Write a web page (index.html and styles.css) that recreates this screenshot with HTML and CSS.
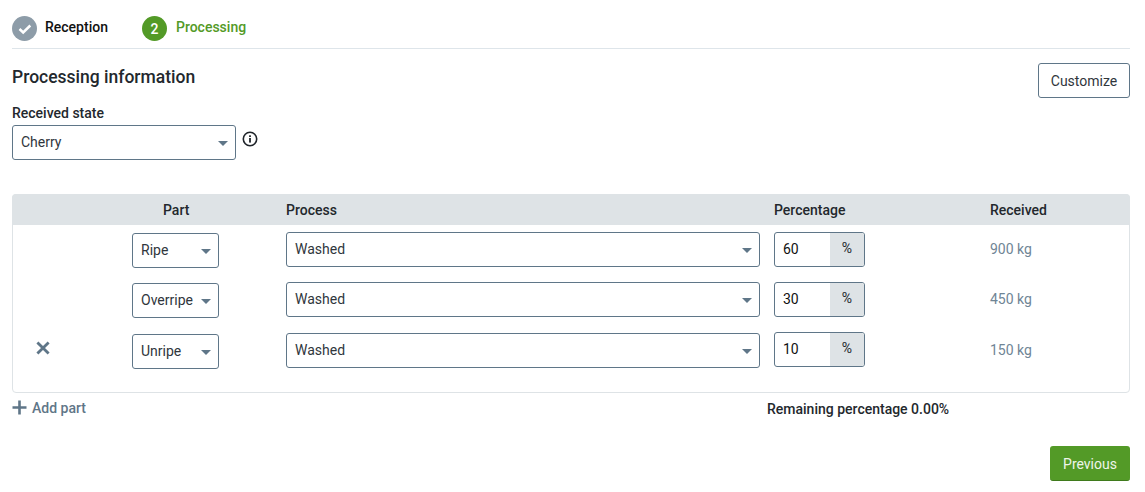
FILE: index.html
```html
<!DOCTYPE html>
<html lang="en">
<head>
<meta charset="utf-8">
<title>Processing</title>
<link rel="stylesheet" href="styles.css">
</head>
<body>
<div class="page">
  <nav class="stepper">
    <div class="step done">
      <span class="dot"><svg width="14" height="14" viewBox="0 0 14 14"><path d="M1.500 7 5.200 10.500 12.300 3.500" fill="none" stroke="#fff" stroke-width="2.500"/></svg></span>
      <span class="step-label">Reception</span>
    </div>
    <div class="step active">
      <span class="dot">2</span>
      <span class="step-label">Processing</span>
    </div>
  </nav>
  <section class="info">
    <div>
      <h1>Processing information</h1>
      <label class="field-label">Received state</label>
      <div class="state-row">
        <div class="select state"><span>Cherry</span><i class="caret"></i></div>
        <svg class="info-icon" width="16" height="16" viewBox="0 0 16 16"><circle cx="8" cy="8" r="6.700" fill="none" stroke="#1f2429" stroke-width="1.600"/><rect x="7.100" y="7" width="1.800" height="4.600" fill="#1f2429"/><rect x="7.100" y="4.300" width="1.800" height="1.700" fill="#1f2429"/></svg>
      </div>
    </div>
    <button class="btn outline">Customize</button>
  </section>
  <section class="table">
    <div class="thead grid">
      <span></span><span class="th-part">Part</span><span>Process</span><span>Percentage</span><span>Received</span>
    </div>
    <div class="tbody">
      <div class="row grid">
        <span></span>
        <div class="select part"><span>Ripe</span><i class="caret"></i></div>
        <div class="select"><span>Washed</span><i class="caret"></i></div>
        <div class="pct"><span class="pct-val">60</span><span class="pct-unit">%</span></div>
        <span class="kg">900 kg</span>
      </div>
      <div class="row grid">
        <span></span>
        <div class="select part"><span>Overripe</span><i class="caret"></i></div>
        <div class="select"><span>Washed</span><i class="caret"></i></div>
        <div class="pct"><span class="pct-val">30</span><span class="pct-unit">%</span></div>
        <span class="kg">450 kg</span>
      </div>
      <div class="row grid last">
        <svg class="remove" width="14" height="14" viewBox="0 0 14 14"><path d="M1.400 1.400 12.600 12.600M12.600 1.400 1.400 12.600" stroke="#5f7688" stroke-width="2.800" fill="none"/></svg>
        <div class="select part"><span>Unripe</span><i class="caret"></i></div>
        <div class="select"><span>Washed</span><i class="caret"></i></div>
        <div class="pct"><span class="pct-val">10</span><span class="pct-unit">%</span></div>
        <span class="kg">150 kg</span>
      </div>
    </div>
  </section>
  <div class="below">
    <div class="add"><svg width="15" height="15" viewBox="0 0 15 15"><path d="M7.500 .5V14.500M.5 7.500H14.500" stroke="#5f7688" stroke-width="2.600" fill="none"/></svg><span>Add part</span></div>
    <div class="remaining">Remaining percentage 0.00%</div>
  </div>
  <div class="footer"><button class="btn primary">Previous</button></div>
</div>
</body>
</html>
```
FILE: styles.css
```css
* { box-sizing: border-box; }
html, body { margin: 0; padding: 0; background: #fff; }
body { font-family: Roboto, "Liberation Sans", sans-serif; font-size: 14px; color: #2a3036; overflow: hidden; }
.page { width: 1145px; height: 492px; padding: 16px 15px 0 12px; }

.stepper { display: flex; gap: 34px; height: 33px; border-bottom: 1px solid #dee5ea; }
.step { display: flex; align-items: flex-start; gap: 8px; }
.step.active { gap: 9px; }
.dot { width: 25px; height: 25px; border-radius: 50%; display: flex; align-items: center; justify-content: center; color: #fff; font-size: 14px; font-weight: 500; }
.done .dot { background: #8d9ca8; }
.active .dot { background: #539a27; }
.step-label { font-size: 14px; font-weight: 500; line-height: 22px; }
.done .step-label { color: #111; }
.active .step-label { color: #539a27; }

.info { display: flex; justify-content: space-between; align-items: flex-start; height: 145px; }
h1 { margin: 17px 0 0; font-size: 17.5px; font-weight: 500; line-height: 22px; color: #23282d; }
.field-label { display: block; margin-top: 16px; font-size: 14px; font-weight: 500; line-height: 18px; color: #23282d; }
.state-row { display: flex; align-items: flex-start; gap: 7px; margin-top: 3px; }
.select { height: 35px; padding: 0 8px; border: 1px solid #5f7688; border-radius: 3px; background: #fff; display: flex; align-items: center; justify-content: space-between; font-size: 14px; color: #30363c; }
.select > span { margin-top: -1px; }
.state { width: 224px; }
.info-icon { margin-top: 6px; margin-left: -1px; }
.caret { width: 0; height: 0; border-left: 5px solid transparent; border-right: 5px solid transparent; border-top: 5px solid #5f7688; margin: 1px -1px 0 0; }

.btn { font-family: inherit; font-size: 14px; border-radius: 3px; height: 35px; }
.outline { margin-top: 14px; width: 92px; background: #fff; color: #30363c; border: 1px solid #5f7688; }
.primary { width: 80px; padding-top: 2px; background: #539a27; color: #eef5ea; border: 0; border-bottom: 1px solid #3f7a1c; }

.table { height: 199px; border: 1px solid #dee3e6; border-radius: 4px; }
.grid { display: grid; grid-template-columns: 119px 154px 488px 216px 1fr; align-items: start; }
.thead { height: 31px; margin: -1px -1px 0; padding-left: 1px; background: #dee3e6; border-radius: 4px 4px 0 0; font-size: 14px; font-weight: 500; line-height: 32px; color: #23282d; }
.th-part { padding-left: 31px; }
.tbody { padding-top: 7px; }
.row { height: 50px; }
.row.last { height: 51px; }
.row.grid:nth-child(2) { height: 51px; }
.part { width: 87px; margin-top: 1px; }
.row .select:not(.part) { width: 474px; }
.kg { color: #6f8595; font-size: 14px; line-height: 34px; }
.remove { margin: 8px 0 0 23px; }

.pct { width: 91px; height: 35px; display: flex; border: 1px solid #5f7688; border-radius: 3px; overflow: hidden; }
.last .pct { margin-top: -1px; }
.pct-val { width: 55px; padding-left: 8px; line-height: 32px; color: #111; font-size: 14px; }
.pct-unit { flex: 1; background: #dee3e6; text-align: center; font-size: 14px; line-height: 31px; color: #23282d; }

.below { display: flex; height: 53px; }
.add { display: flex; gap: 5px; align-items: center; height: 17px; margin-top: 6px; font-size: 14px; font-weight: 500; color: #5f7688; width: 755px; }
.remaining { margin-top: 8px; font-size: 14px; font-weight: 500; color: #23282d; line-height: 17px; }
.footer { display: flex; justify-content: flex-end; }
```
